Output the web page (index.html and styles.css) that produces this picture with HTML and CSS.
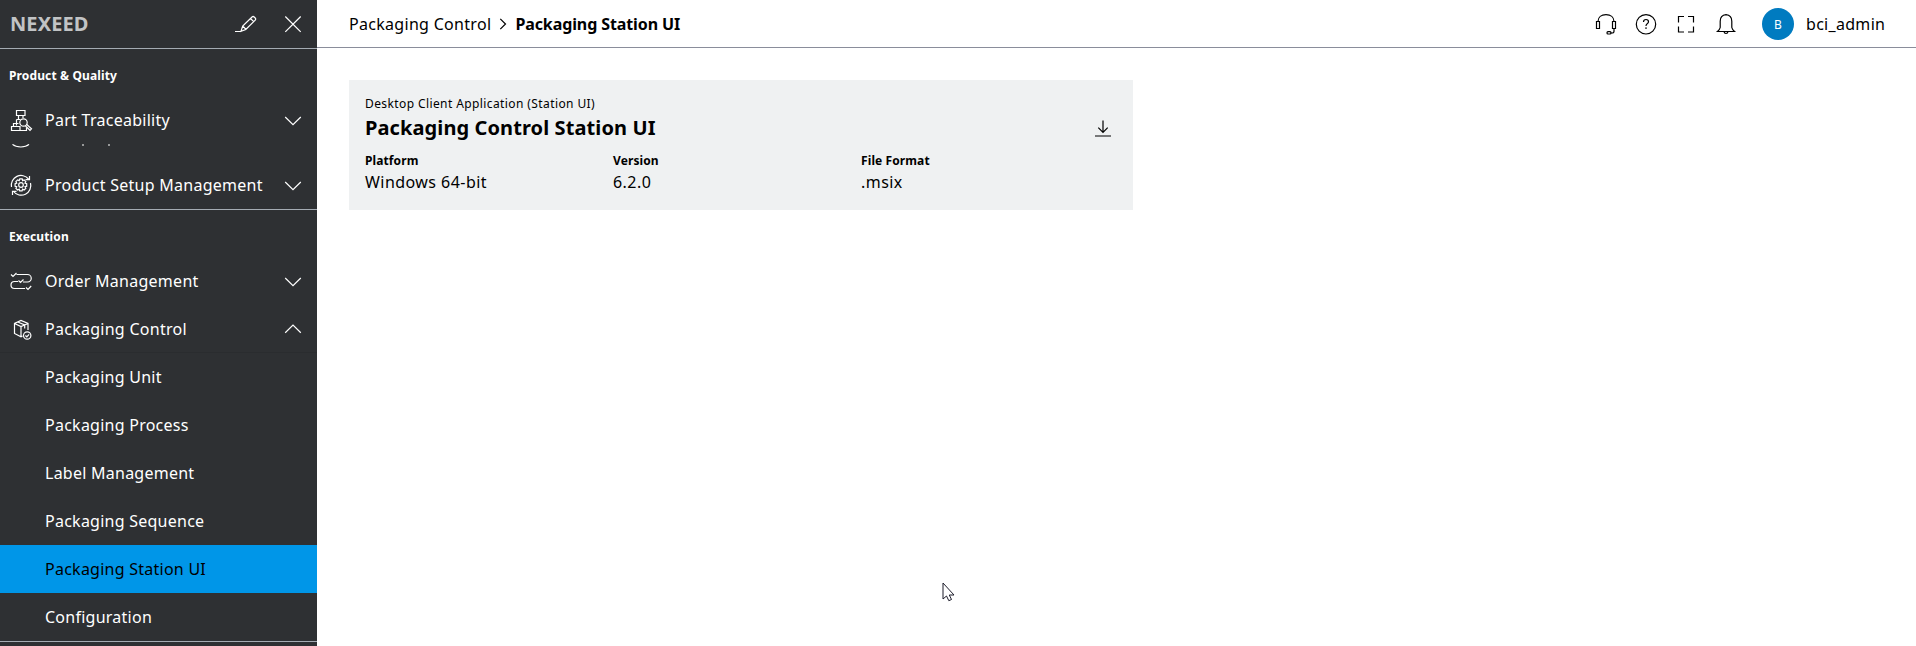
FILE: index.html
```html
<!DOCTYPE html>
<html lang="en">
<head>
    <meta charset="UTF-8">
    <meta name="viewport" content="width=device-width, initial-scale=1.0">
    <title>Packaging Station UI</title>
    <link rel="stylesheet" href="styles.css">
</head>
<body>
    <aside class="sidebar">
        <div class="sidebar-header">
            <span class="brand">NEXEED</span>
            <svg class="icon edit-icon" width="24" height="24" viewBox="0 0 24 24">
                <path d="M1 19.500h6M7 19.300l1.700-5.300L18 5q1.200-1 2.200 0l1 1q1 1 0 2.200l-9.400 9.300zM8.700 14l3.300 3.300M16.500 6.500l3.200 3.200"/>
            </svg>
            <svg class="icon" width="24" height="24" viewBox="0 0 24 24">
                <path d="M4.300 4.500l15.400 15.400M19.700 4.500L4.300 19.900"/>
            </svg>
        </div>

        <nav class="section">
            <h2 class="section-title">Product &amp; Quality</h2>
            <a class="item">
                <svg class="icon" width="24" height="24" viewBox="0 0 24 24">
                    <path d="M7.500 2.500h8.500V7.500H7.500zM9.500 7.500v3.500M14 7.500V10M7.500 11.500h4M7.500 11.500v6M2.500 18.500h8.500v4H2.500zM4.500 18.500V15.500h5M11 22.500h6.500v-3"/>
                    <circle cx="14.500" cy="14.500" r="3.700"/>
                    <path d="M16.500 18l4.500 4.300 1.500-1.500-4.700-4.300"/>
                </svg>
                <span>Part Traceability</span>
                <svg class="icon chevron" width="24" height="24" viewBox="0 0 24 24"><path d="M4.200 9l7.800 7.600L19.800 9"/></svg>
            </a>
            <!-- bottom edge of the row scrolled under Part Traceability -->
            <div class="clipped">
                <svg class="icon" width="120" height="4" viewBox="0 0 120 4">
                    <path d="M3.500 .4q3 2.600 8.300 2.600t8.200-2.600M73 1h2M99 1h2"/>
                </svg>
            </div>
            <a class="item">
                <svg class="icon" width="24" height="24" viewBox="0 0 24 24">
                    <path d="M2.500 14A9.700 9.700 0 0 1 19.500 6M21.500 10A9.700 9.700 0 0 1 4.500 18.500M20.500 3v3.700h-4M3.500 22v-3.700h4"/>
                    <path d="M10.800 5.900h2.400l.4 1.700 1.500-.7 1.700 1.700-.8 1.500 1.700.6v2.500l-1.700.5.8 1.600-1.700 1.700-1.500-.8-.5 1.700h-2.400l-.5-1.700-1.600.8-1.700-1.700.8-1.600-1.600-.5v-2.500l1.600-.6-.8-1.500 1.700-1.700 1.600.7z"/>
                    <circle cx="12" cy="12" r="2.300"/>
                </svg>
                <span>Product Setup Management</span>
                <svg class="icon chevron" width="24" height="24" viewBox="0 0 24 24"><path d="M4.200 9l7.800 7.600L19.800 9"/></svg>
            </a>
        </nav>

        <nav class="section">
            <h2 class="section-title">Execution</h2>
            <a class="item">
                <svg class="icon" width="24" height="24" viewBox="0 0 24 24">
                    <path d="M2 5.500l2 2L7.500 4M7.500 5.500h11a3.700 3.700 0 0 1 0 7.500H14M14.500 10.500l-3 3-2-2M9 12.500H5.500a3.500 3.500 0 0 0 0 7H16M17 18.500l2 2 3.200-3.500"/>
                </svg>
                <span>Order Management</span>
                <svg class="icon chevron" width="24" height="24" viewBox="0 0 24 24"><path d="M4.200 9l7.800 7.600L19.800 9"/></svg>
            </a>
            <a class="item">
                <svg class="icon" width="24" height="24" viewBox="0 0 24 24">
                    <path d="M13.500 19l-1.500.8-6.500-3.300V6.500l6.500-3 7 3V13M5.500 6.500l6.500 3 7-3M12 9.500v10.300M8.700 5l7 3v3.500"/>
                    <circle cx="18.200" cy="18.500" r="3.700"/>
                    <path d="M16.400 18.500l1.400 1.300 2.300-2.500"/>
                </svg>
                <span>Packaging Control</span>
                <svg class="icon chevron" width="24" height="24" viewBox="0 0 24 24"><path d="M4.200 15.700L12 8.100l7.800 7.600"/></svg>
            </a>
            <div class="submenu">
                <a class="subitem">Packaging Unit</a>
                <a class="subitem">Packaging Process</a>
                <a class="subitem">Label Management</a>
                <a class="subitem">Packaging Sequence</a>
                <a class="subitem active">Packaging Station UI</a>
                <a class="subitem">Configuration</a>
            </div>
        </nav>
    </aside>

    <div class="page">
        <header class="topbar">
            <div class="breadcrumb">
                <span class="crumb">Packaging Control</span>
                <svg class="icon" width="8" height="12" viewBox="0 0 8 12"><path d="M1.300 .8L6.500 6l-5.200 5.200"/></svg>
                <span class="crumb current">Packaging Station UI</span>
            </div>
            <div class="actions">
                <svg class="icon" width="24" height="24" viewBox="0 0 24 24">
                    <path d="M4 9.500C4 5 7.500 2.600 12 2.600S20 5 20 9.500M2.500 9.500h3v7h-3zM18.500 9.500h3v7h-3zM20 16.500v2.700q0 1.800-2 1.800h-1.500"/>
                    <rect x="13" y="19.700" width="4" height="2.300" rx="1"/>
                </svg>
                <svg class="icon" width="24" height="24" viewBox="0 0 24 24">
                    <circle cx="12" cy="12.300" r="9.700"/>
                    <path d="M9.500 10q0-2.500 2.500-2.500t2.500 2.200q0 1.100-1.300 2-1.200.8-1.200 2.300"/>
                    <path d="M12 15.300V17"/>
                </svg>
                <svg class="icon" width="24" height="24" viewBox="0 0 24 24">
                    <path d="M4.500 10.500v-6H10M14 4.500h5.500v6M19.500 14.500v5.500H14M10 20H4.500v-5.500"/>
                </svg>
                <svg class="icon" width="24" height="24" viewBox="0 0 24 24">
                    <path d="M3.500 19.500h17q-2.300-2-2.700-4V9.200q0-6-5.800-6.600-5.800.6-5.800 6.600v6.300q-.4 2-2.700 4zM10 19.700q.3 1.800 2 1.800t2-1.800"/>
                </svg>
            </div>
            <div class="avatar">B</div>
            <span class="username">bci_admin</span>
        </header>

        <main class="content">
            <section class="card">
                <div class="card-type">Desktop Client Application (Station UI)</div>
                <div class="card-head">
                    <h1 class="card-title">Packaging Control Station UI</h1>
                    <svg class="icon" width="24" height="24" viewBox="0 0 24 24">
                        <path d="M12 4.500v12M7.300 11.700l4.700 4.700 4.700-4.700M4 20h16"/>
                    </svg>
                </div>
                <dl class="details">
                    <div class="detail">
                        <dt>Platform</dt>
                        <dd>Windows 64-bit</dd>
                    </div>
                    <div class="detail">
                        <dt>Version</dt>
                        <dd>6.2.0</dd>
                    </div>
                    <div class="detail">
                        <dt>File Format</dt>
                        <dd>.msix</dd>
                    </div>
                </dl>
            </section>
        </main>
    </div>

    <svg class="cursor" width="14" height="20" viewBox="0 0 14 20">
        <path d="M1 1v16l3.500-3 2.300 4.700 2.700-1.200-2.200-4.500H12z"/>
    </svg>
</body>
</html>
```

FILE: styles.css
```css
:root {
    --dark: #2e3033;
    --blue: #0096e8;
    --avatar-blue: #007bc0;
    --card: #eff1f2;
}

* {
    box-sizing: border-box;
}

body {
    display: flex;
    height: 100vh;
    margin: 0;
    overflow: hidden;
    background: #fff;
    color: #000;
    font-family: "Noto Sans", sans-serif;
    font-size: 16px;
    line-height: 24px;
}

h1, h2, dl, dd {
    margin: 0;
}

.icon {
    flex: none;
    fill: none;
    stroke: currentColor;
    stroke-width: 1.2;
}

.sidebar {
    flex: none;
    width: 317px;
    background: var(--dark);
    color: #fff;
}

.sidebar-header {
    display: flex;
    align-items: center;
    height: 49px;
    padding: 0 12px 0 10px;
    border-bottom: 1px solid #a4abb3;
}

.brand {
    flex: 1;
    color: #c1c3c5;
    font-size: 20px;
    font-weight: 700;
    letter-spacing: 0.1px;
}

.edit-icon {
    margin-right: 23px;
}

.section {
    border-bottom: 1px solid #a4abb3;
}

.section-title {
    height: 47px;
    padding: 15px 9px 0;
    font-size: 12px;
    font-weight: 700;
    letter-spacing: 0.13px;
}

.item {
    display: flex;
    align-items: center;
    gap: 12px;
    height: 48px;
    padding: 0 12px 0 9px;
    letter-spacing: 0.27px;
}

.chevron {
    margin-left: auto;
}

.clipped {
    display: flex;
    height: 17px;
    padding-left: 9px;
}

.submenu {
    box-shadow: 0 -1px #2a2c2f;
}

.subitem {
    display: flex;
    align-items: center;
    height: 48px;
    padding-left: 45px;
    letter-spacing: 0.25px;
}

.subitem.active {
    background: var(--blue);
    color: #000;
}

.page {
    flex: 1;
}

.topbar {
    display: flex;
    align-items: center;
    height: 48px;
    padding: 0 32px;
    border-bottom: 1px solid #8a8d9b;
}

.breadcrumb {
    display: flex;
    flex: 1;
    align-items: center;
    gap: 8px;
}

.crumb {
    letter-spacing: 0.3px;
}

.current {
    font-weight: 700;
    letter-spacing: -0.1px;
}

.actions {
    display: flex;
    gap: 16px;
    margin-right: 24px;
}

.avatar {
    width: 32px;
    height: 32px;
    margin-right: 12px;
    border-radius: 50%;
    background: var(--avatar-blue);
    color: #fff;
    font-size: 12px;
    line-height: 33px;
    text-align: center;
}

.username {
    width: 78px;
    letter-spacing: 0.3px;
}

.content {
    padding: 32px;
}

.card {
    width: 784px;
    height: 130px;
    padding: 16px;
    background: var(--card);
}

.card-type {
    font-size: 12px;
    line-height: 16px;
    letter-spacing: 0.4px;
}

.card-head {
    display: flex;
    align-items: center;
    justify-content: space-between;
    height: 32px;
    padding-right: 2px;
}

.card-title {
    font-size: 20px;
    font-weight: 700;
    letter-spacing: 0.1px;
}

.details {
    display: flex;
    padding-top: 8px;
}

.detail {
    width: 248px;
}

.detail dt {
    font-size: 12px;
    font-weight: 700;
    line-height: 18px;
    letter-spacing: 0.1px;
}

.detail dd {
    letter-spacing: 0.45px;
}

.cursor {
    position: absolute;
    top: 582px;
    left: 942px;
    fill: #fff;
    stroke: #1d1d2b;
}
```
